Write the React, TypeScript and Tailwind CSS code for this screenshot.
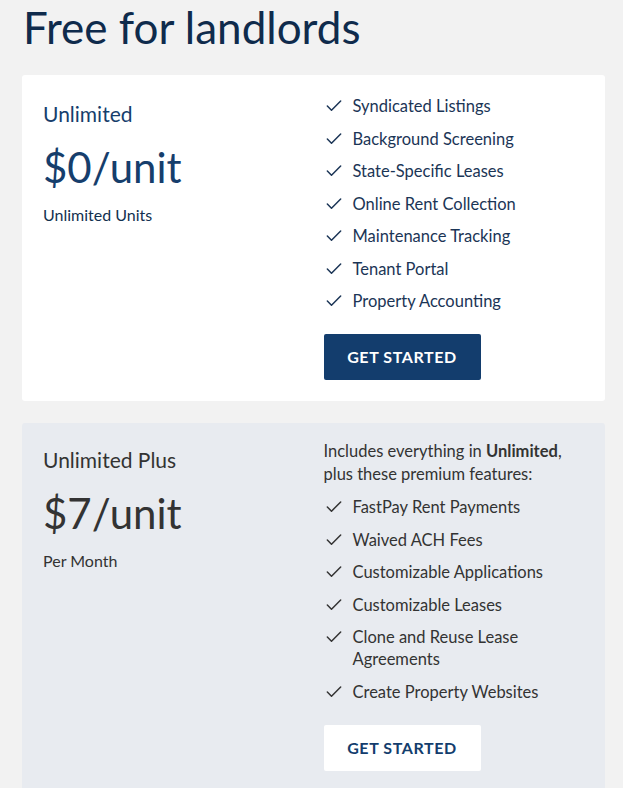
import { Check } from "lucide-react";

const freeFeatures = [
  "Syndicated Listings",
  "Background Screening",
  "State-Specific Leases",
  "Online Rent Collection",
  "Maintenance Tracking",
  "Tenant Portal",
  "Property Accounting",
];

const plusFeatures = [
  "FastPay Rent Payments",
  "Waived ACH Fees",
  "Customizable Applications",
  "Customizable Leases",
  "Clone and Reuse Lease Agreements",
  "Create Property Websites",
];

function FeatureList({ items, tone }: { items: string[]; tone: string }) {
  return (
    <ul className="flex flex-col gap-[10.5px]">
      {items.map((item) => (
        <li key={item} className={`flex items-start gap-[9px] text-[16.5px] leading-[22px] ${tone}`}>
          <Check className="mt-[1px] h-5 w-5 shrink-0" strokeWidth={1.8} />
          <span>{item}</span>
        </li>
      ))}
    </ul>
  );
}

export default function App() {
  return (
    <div
      className="min-h-[788px] bg-[#f2f2f2] pl-[22px] pr-[18px] pb-10"
      style={{ fontFamily: "Lato, 'Noto Sans', sans-serif" }}
    >
      <h1 className="pt-[2px] pl-px text-[44px] leading-[50px] text-[#0f2b4c]">Free for landlords</h1>

      {/* Free plan */}
      <div className="mt-[23px] grid grid-cols-2 gap-5 rounded-[3px] bg-white px-5 pt-[20px] pb-[21px]">
        <div className="pt-[6px] pl-px text-[#163e6c]">
          <h2 className="text-[21px] leading-[26px]">Unlimited</h2>
          <p className="mt-[15px] text-[42px] leading-[50px]">$0/unit</p>
          <p className="mt-[12px] text-base leading-[22px] text-[#12304f]">Unlimited Units</p>
        </div>
        <div>
          <FeatureList items={freeFeatures} tone="text-[#1b3556]" />
          <button className="mt-[22px] h-[46px] w-[157px] rounded-[2px] bg-[#133d6d] text-base font-bold tracking-[0.6px] text-white">
            GET STARTED
          </button>
        </div>
      </div>

      {/* Plus plan */}
      <div className="mt-[22px] grid grid-cols-2 gap-5 rounded-[3px] bg-[#e8ebf0] px-5 pt-[20px] pb-[21px]">
        <div className="pt-[4px] pl-px text-[#333333]">
          <h2 className="text-[21px] leading-[26px]">Unlimited Plus</h2>
          <p className="mt-[15px] text-[42px] leading-[50px]">$7/unit</p>
          <p className="mt-[12px] text-base leading-[22px]">Per Month</p>
        </div>
        <div>
          <p className="-mt-[3px] mb-[10px] text-[16.5px] leading-[23px] text-[#333333]">
            Includes everything in <b className="font-bold">Unlimited</b>, plus these premium features:
          </p>
          <FeatureList items={plusFeatures} tone="text-[#333333]" />
          <button className="mt-[22px] h-[46px] w-[157px] rounded-[2px] bg-white text-base font-bold tracking-[0.6px] text-[#133d6d]">
            GET STARTED
          </button>
        </div>
      </div>
    </div>
  );
}
